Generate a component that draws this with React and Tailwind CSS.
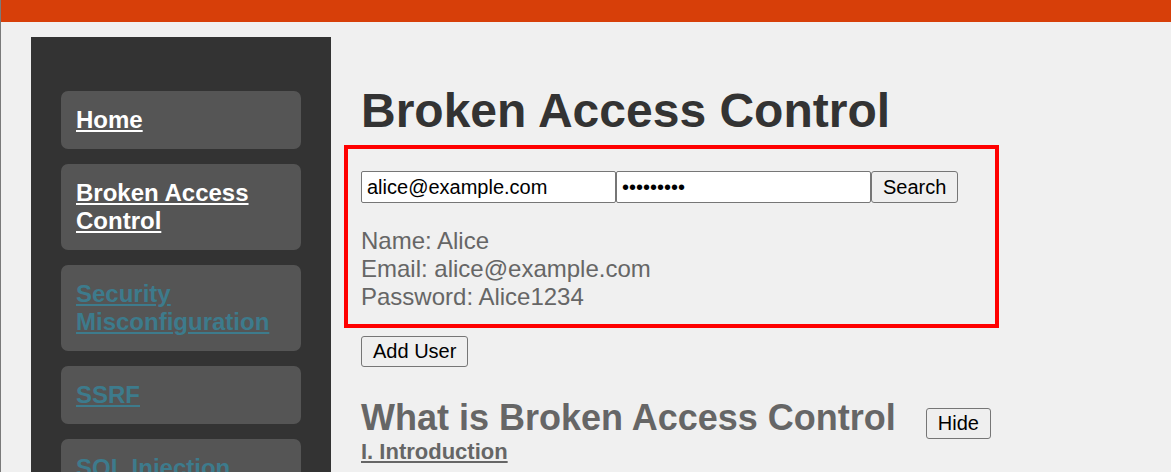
import React from 'react';

const navItems = [
  { label: 'Home', active: true },
  { label: 'Broken Access Control', active: true },
  { label: 'Security Misconfiguration', active: false },
  { label: 'SSRF', active: false },
  { label: 'SQL Injection', active: false },
  { label: 'Cryptographic Failures', active: false },
];

function NavItem({ label, active }) {
  return (
    <div className="rounded-[7px] bg-[#555555] pl-[15px] pr-4 py-[15px] text-[24px] leading-[28px] font-bold">
      <a
        href="#"
        className={`underline ${active ? 'text-white' : 'text-[#3d7b8c]'}`}
      >
        {label}
      </a>
    </div>
  );
}

function Btn({ children }) {
  return (
    <button className="rounded-[3px] border border-[#767676] bg-[#efefef] px-[11px] py-[3px] text-[20px] leading-[23px] text-black">
      {children}
    </button>
  );
}

export default function App() {
  return (
    <div className="min-h-[472px] overflow-hidden border-l border-[#7a7a7a] bg-[#f0f0f0] font-['Liberation_Sans',Arial,sans-serif]">
      {/* Top bar */}
      <div className="h-[22px] bg-[#d73f09]" />

      <div className="flex pl-[30px] pt-[15px]">
        {/* Sidebar */}
        <aside className="w-[300px] shrink-0 bg-[#333333] px-[30px] pt-[54px] pb-8">
          <nav className="flex flex-col gap-[15px]">
            {navItems.map((item) => (
              <NavItem key={item.label} {...item} />
            ))}
          </nav>
        </aside>

        {/* Main */}
        <main className="pl-[30px] pt-[46px]">
          <h1 className="text-[48px] leading-[55px] font-bold text-[#333333]">
            Broken Access Control
          </h1>

          <div className="mt-[7px] ml-[-17px] w-[655px] border-4 border-[#ff0000] pl-[13px] pt-[22px] pb-[13px]">
            <div className="flex">
              <input
                type="text"
                defaultValue="alice@example.com"
                className="h-[32px] w-[255px] rounded-[2px] border border-[#767676] bg-white px-[5px] text-[20px] text-black outline-none"
              />
              <input
                type="password"
                defaultValue="Alice1234"
                className="h-[32px] w-[255px] rounded-[2px] border border-[#767676] bg-white px-[5px] text-[20px] text-black outline-none"
              />
              <button className="h-[32px] rounded-[3px] border border-[#767676] bg-[#efefef] px-[11px] text-[20px] text-black">
                Search
              </button>
            </div>
            <div className="mt-[24px] text-[24px] leading-[28px] text-[#666666]">
              <div>Name: Alice</div>
              <div>Email: alice@example.com</div>
              <div>Password: Alice1234</div>
            </div>
          </div>

          <div className="mt-[8px]">
            <Btn>Add User</Btn>
          </div>

          <div className="mt-[30px] flex items-baseline gap-[30px]">
            <h2 className="text-[36px] leading-[41px] font-bold text-[#666666]">
              What is Broken Access Control
            </h2>
            <Btn>Hide</Btn>
          </div>
          <a
            href="#"
            className="block text-[22px] leading-[25px] font-bold text-[#666666] underline"
          >
            I. Introduction
          </a>
        </main>
      </div>
    </div>
  );
}
